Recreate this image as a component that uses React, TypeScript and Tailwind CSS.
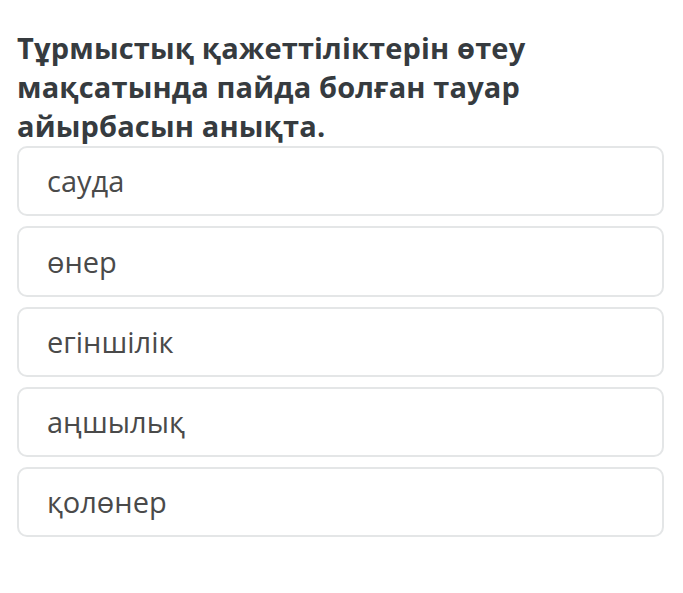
const options = ["сауда", "өнер", "егіншілік", "аңшылық", "қолөнер"];

export default function App() {
  return (
    <div className="min-h-[593px] bg-white pt-[28px] px-[17px] font-['Open_Sans',sans-serif]">
      <h1 className="text-[29px] leading-[39px] font-bold text-[#363b3f] tracking-[0.15px]">
        Тұрмыстық қажеттіліктерін өтеу
        <br />
        мақсатында пайда болған тауар
        <br />
        айырбасын анықта.
      </h1>
      <div className="mt-[1px] flex flex-col gap-[10px] w-[647px]">
        {options.map((o) => (
          <div
            key={o}
            className="h-[70.25px] rounded-[10px] border-2 border-[#e4e6e7] flex items-center px-[28px] text-[29px] text-[#4a4a4a]"
          >
            {o}
          </div>
        ))}
      </div>
    </div>
  );
}
